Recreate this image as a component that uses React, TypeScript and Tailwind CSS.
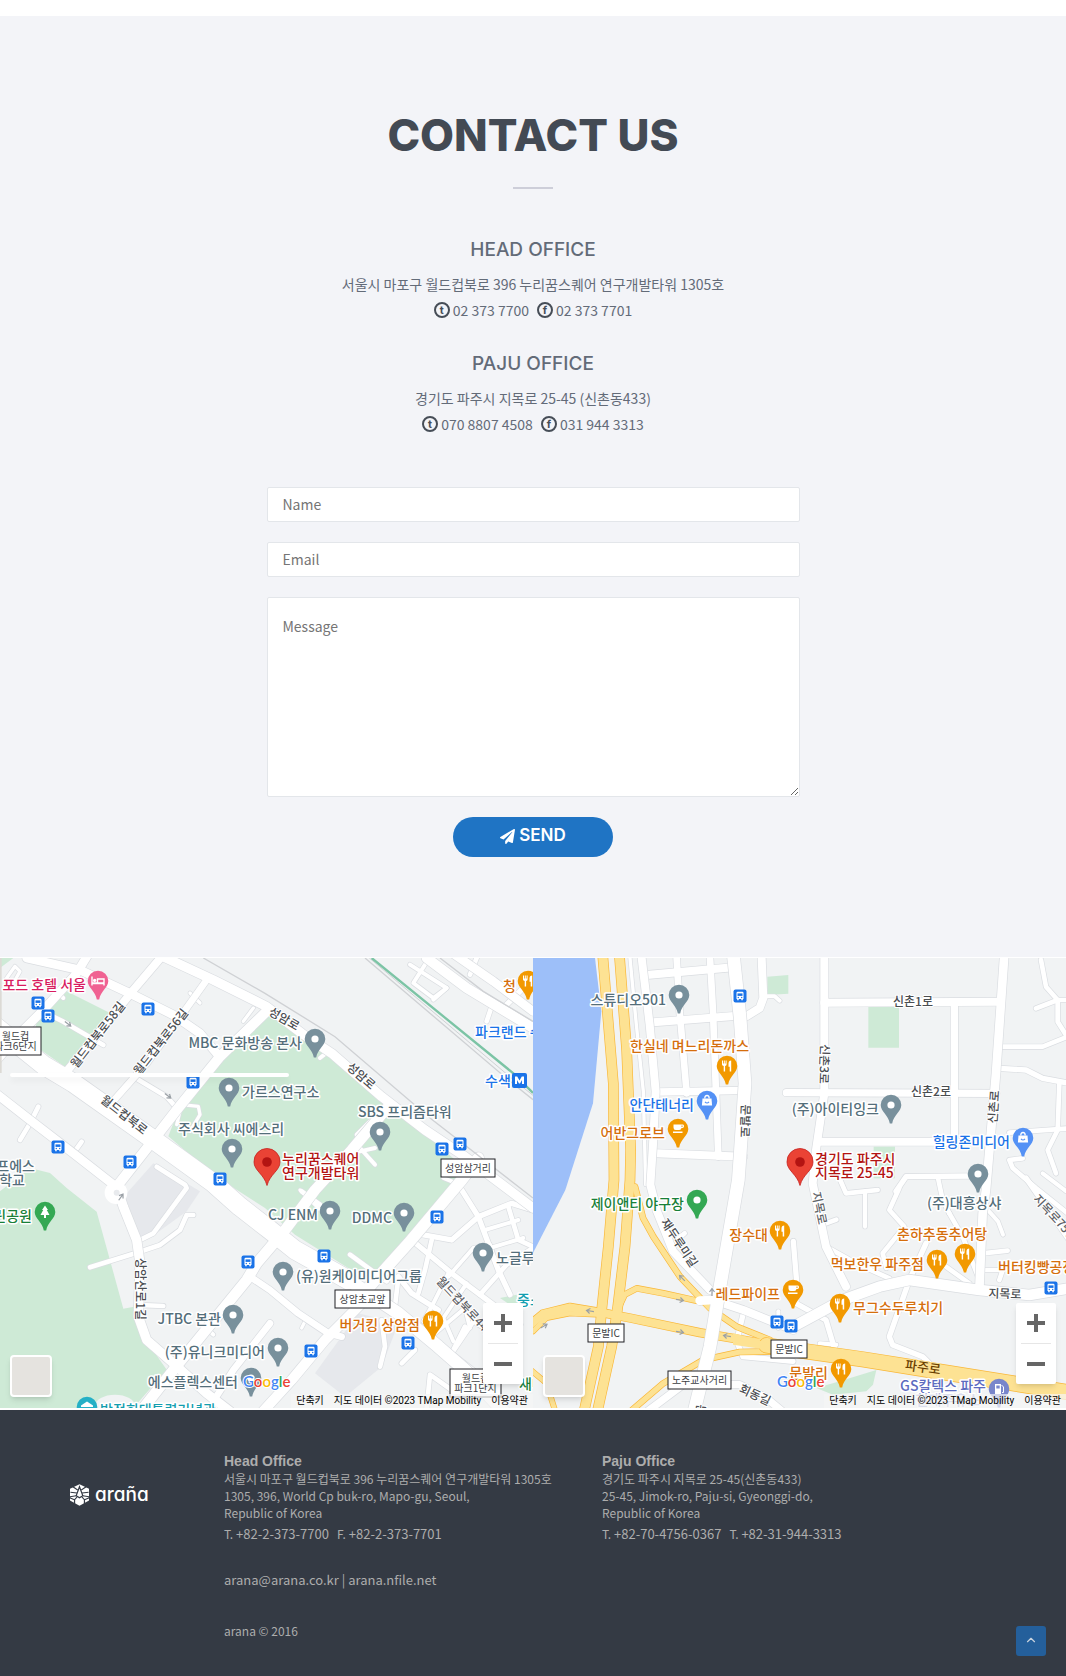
import type { ReactNode } from "react";
import { FaPaperPlane } from "react-icons/fa";
import { ChevronUp } from "lucide-react";

/* ---------- map drawing primitives ---------- */

// [points, width] in map units (three per pixel)
type Road = [string, number];

function Roads({ roads, fill = "#ffffff", edge = "#dadde1" }: { roads: Road[]; fill?: string; edge?: string }) {
  return (
    <g fill="none" strokeLinecap="round" strokeLinejoin="round">
      {roads.map(([p, w], i) => (
        <polyline key={"e" + i} points={p} stroke={edge} strokeWidth={w + 4} />
      ))}
      {roads.map(([p, w], i) => (
        <polyline key={"f" + i} points={p} stroke={fill} strokeWidth={w} />
      ))}
    </g>
  );
}

const PIN_COLORS = {
  place: "#78909c",
  food: "#f29900",
  cafe: "#f29900",
  shop: "#5491f5",
  hotel: "#f06292",
  tree: "#34a853",
  park: "#34a853",
  museum: "#25b0c6",
  gas: "#7986cb",
};
type Kind = keyof typeof PIN_COLORS;

function Glyph({ kind }: { kind: Kind }) {
  switch (kind) {
    case "food":
      return (
        <g fill="#fff">
          <path d="M-5-5.500h1v3h.8v-3h1v3h.8v-3h1v4q0 1.200-1.500 1.600V5.500h-1.400V.1Q-5-.3-5-1.500z" />
          <path d="M1.500-2.500q0-3 2.700-3V5.500H2.700V.8H1.500z" />
        </g>
      );
    case "cafe":
      return (
        <g fill="#fff">
          <path d="M-4.500-4.500h9.500q1 .3 1 1.800t-1.500 1.800h-1q-.3 2-2.300 2h-3.500q-2.200 0-2.200-2.500zM3.500-3.500v1.600h1v-1.600z" fillRule="evenodd" />
          <rect x="-5" y="2.500" width="9.500" height="1.500" />
        </g>
      );
    case "shop":
      return (
        <g>
          <path d="M-4.500-2.500h9l.6 7h-10.200z" fill="#fff" />
          <path d="M-2.200-2.500q0-3 2.200-3t2.200 3" fill="none" stroke="#fff" strokeWidth="1.300" />
          <path d="M-2 .8q2 2.400 4 0" fill="none" stroke="#5491f5" strokeWidth="1.200" />
        </g>
      );
    case "hotel":
      return (
        <g fill="none" stroke="#fff" strokeWidth="1.400">
          <path d="M-6-4.500V4.500M-6 2.500H6V4.500V-2H-.5V2M-6 2h12" />
          <circle cx="-3.300" cy="-.6" r="1" fill="#fff" />
        </g>
      );
    case "tree":
      return <path d="M0-6.500l3 4.500H1.800L4.500 3H1v3h-2V3h-3.500L-1.800-2H-3z" fill="#fff" />;
    case "museum":
      return <path d="M-6-1.500 0-5.500 6-1.500V0H-6zM-4.500 1h1.500v4h-1.500zM-.8 1H.8v4H-.8zM3 1h1.500v4H3z" fill="#fff" />;
    case "gas":
      return (
        <g>
          <path d="M-4-5H2V5h-6z" fill="#fff" />
          <rect x="-2.700" y="-3.500" width="3.400" height="3" fill="#7986cb" />
          <path d="M2.500-4l2 2v5.500H3" fill="none" stroke="#fff" />
        </g>
      );
    default:
      return <circle r="3.600" fill="#fff" />;
  }
}

function Pin({ x, y, kind = "place" }: { x: number; y: number; kind?: Kind }) {
  return (
    <g transform={`translate(${x} ${y})`}>
      <path d="M0-10.300A10.300 10.300 0 0 1 10.300 0C10.300 6.500 2.500 10 1.200 18.500H-1.200C-2.500 10-10.300 6.500-10.300 0A10.300 10.300 0 0 1 0-10.300z" fill={PIN_COLORS[kind]} />
      <Glyph kind={kind} />
    </g>
  );
}

function Marker({ x, y }: { x: number; y: number }) {
  return (
    <g transform={`translate(${x} ${y})`}>
      <path d="M0-13.500A13 13 0 0 1 13 0C13 8.500 3 12 0 23.500C-3 12-13 8.500-13 0A13 13 0 0 1 0-13.500z" fill="#ea4335" stroke="#c5221f" strokeWidth=".8" />
      <circle r="4.800" fill="#b31412" />
    </g>
  );
}

function Bus({ x, y }: { x: number; y: number }) {
  return (
    <g transform={`translate(${x} ${y})`}>
      <rect x="-6.500" y="-6.500" width="13" height="13" rx="2" fill="#1a73e8" />
      <path d="M-3.500-3q0-1.200 1.200-1.200h4.600Q3.500-4.200 3.500-3V3H2.800v1.300H1.300V3h-2.600v1.300h-1.500V3h-.7z" fill="#fff" />
      <rect x="-2.500" y="-2.600" width="5" height="2.500" fill="#1a73e8" />
      <circle cx="-1.700" cy="1.500" r=".7" fill="#1a73e8" />
      <circle cx="1.700" cy="1.500" r=".7" fill="#1a73e8" />
    </g>
  );
}

// name, x, vertical centre, colour, anchor
type Name = [string, number, number, string?, ("start" | "end")?];
const SLATE = "#546e7a";
const ORANGE = "#d56e0c";
const BLUE = "#1a73e8";
const GREEN = "#188038";
const TEAL = "#129eaf";
const RED = "#b31412";

function Names({ items }: { items: Name[] }) {
  return (
    <g className="text-[14px] font-medium" stroke="#fff" strokeWidth="3" strokeLinejoin="round" paintOrder="stroke">
      {items.map(([t, x, y, c = SLATE, a = "start"]) => (
        <text key={t + x + y} x={x} y={y + 5} fill={c} textAnchor={a}>
          {t}
        </text>
      ))}
    </g>
  );
}

// name, centre x, centre y, angle, colour
type Street = [string, number, number, number, string?];

function Streets({ items }: { items: Street[] }) {
  return (
    <g className="text-[12px] font-medium" stroke="#fff" strokeWidth="2" strokeLinejoin="round" paintOrder="stroke" textAnchor="middle">
      {items.map(([t, x, y, r, c = "#4a4d51"]) => (
        <text key={t + x + y} transform={`translate(${x} ${y}) rotate(${r})`} y="4" fill={c}>
          {t}
        </text>
      ))}
    </g>
  );
}

function Sign({ x, y, w, lines }: { x: number; y: number; w: number; lines: string[] }) {
  return (
    <g className="text-[10px]">
      <rect x={x} y={y} width={w} height={8 + lines.length * 10} fill="#fff" stroke="#202124" />
      {lines.map((l, i) => (
        <text key={l} x={x + w / 2} y={y + 13 + i * 10} fill="#3c4043" textAnchor="middle">
          {l}
        </text>
      ))}
    </g>
  );
}

function Arrows({ items }: { items: [number, number, number][] }) {
  return (
    <g fill="none" stroke="#9aa0a6" strokeWidth="1.200">
      {items.map(([x, y, r]) => (
        <path key={x + "-" + y} d="M-4 0H3M0-2.500 3.500 0 0 2.500" transform={`translate(${x} ${y}) rotate(${r})`} />
      ))}
    </g>
  );
}

function GoogleMark({ x, y }: { x: number; y: number }) {
  return (
    <text x={x} y={y} className="font-[Lato,sans-serif] text-[15px] font-semibold" stroke="#fff" strokeWidth="2" paintOrder="stroke">
      <tspan fill="#4285f4">G</tspan>
      <tspan fill="#ea4335">o</tspan>
      <tspan fill="#fbbc05">o</tspan>
      <tspan fill="#4285f4">g</tspan>
      <tspan fill="#34a853">l</tspan>
      <tspan fill="#ea4335">e</tspan>
    </text>
  );
}

/* ---------- map frame with its controls ---------- */

function MapFrame({ label, card, children }: { label: string; card?: boolean; children: ReactNode }) {
  return (
    <div className="relative h-[450px] overflow-hidden bg-[#f1f3f4]" role="region" aria-label={label}>
      <svg className="block h-full w-full" viewBox="0 0 533 450" preserveAspectRatio="xMidYMid slice" aria-hidden="true">
        {children}
      </svg>
      {card && <div className="absolute left-[10px] top-[115px] h-1 w-[279px] rounded-sm bg-white shadow-md" />}
      <button
        type="button"
        aria-label="위성 이미지 보기"
        className="absolute bottom-[11px] left-[10px] size-[42px] rounded-sm border-2 border-white bg-[#e5e3df] shadow-md"
      />
      <div className="absolute bottom-6 right-[10px] flex w-10 flex-col items-center rounded-xs bg-white text-[#666] shadow-md">
        <button type="button" aria-label="확대" className="flex size-10 items-center justify-center">
          <svg viewBox="0 0 18 18" className="size-[18px]" fill="currentColor">
            <path d="M7 0h4v7h7v4h-7v7H7v-7H0V7h7z" />
          </svg>
        </button>
        <div className="h-px w-[30px] bg-[#e6e6e6]" />
        <button type="button" aria-label="축소" className="flex size-10 items-center justify-center">
          <svg viewBox="0 0 18 18" className="size-[18px]" fill="currentColor">
            <path d="M0 7h18v4H0z" />
          </svg>
        </button>
      </div>
      <div className="absolute bottom-0 right-0 flex h-[14px] items-center whitespace-nowrap font-[Roboto,'Noto_Sans_CJK_KR',sans-serif] text-[10px] leading-[14px] text-black">
        <button type="button" className="bg-[#f5f5f5]/70 px-[5px]">단축키</button>
        <span className="bg-[#f5f5f5]/70 px-[5px]">지도 데이터 ©2023 TMap Mobility</span>
        <a href="#terms" className="bg-[#f5f5f5]/70 px-[5px]">이용약관</a>
      </div>
    </div>
  );
}

/* ---------- head office map ---------- */

const SEOUL_MINOR: Road[] = [
  ["115,446 90,496 60,546", 14],
  ["245,551 220,586", 14],
  ["120,156 190,191 310,261", 14],
  ["400,356 500,416 530,450", 14],
  ["190,120 170,100", 12],
  ["600,135 570,105", 10],
  ["730,190 760,150", 10],
  ["20,60 45,25 60,40 40,75", 10],
  ["530,500 545,440 595,445 600,470 570,520", 10],
  ["470,626 555,680 560,690 460,826 410,851", 14],
  ["270,928 420,881 480,861 540,816 560,771 580,771", 14],
  ["420,1041 490,1044", 14],
  ["640,1130 600,1090", 12],
  ["960,300 985,280", 12],
  ["1125,570 1080,580 1070,530 1110,490", 12],
  ["1080,570 1125,620", 12],
  ["905,700 960,740", 14],
  ["900,696 975,770", 10],
  ["1050,890 1160,970", 14],
  ["1385,696 1435,776 1495,936 1530,1010", 16],
  ["1245,826 1355,846 1435,776 1535,736 1599,756", 16],
  ["1235,846 1355,946 1475,1036 1560,1100", 16],
  ["1525,746 1555,846 1599,866", 14],
  ["1455,816 1555,786", 12],
  ["1470,870 1570,840", 12],
  ["1295,846 1275,936 1255,1006", 14],
  ["1345,956 1420,870 1470,860", 12],
  ["1345,946 1300,1036 1270,1090", 12],
  ["1440,1010 1520,920 1599,870", 14],
  ["1400,976 1330,1080 1360,1150", 12],
  ["1195,956 1235,1006 1315,1056", 16],
  ["1195,960 1180,1086", 14],
  ["1145,1086 1155,1166 1140,1226", 14],
  ["1245,1176 1205,1216", 14],
  ["1300,1130 1395,1050 1410,1110", 12],
  ["1395,1106 1355,1186 1450,1260", 14],
  ["1355,1186 1420,1090 1520,1150", 14],
  ["1280,1350 1290,1250 1355,1296 1400,1350", 14],
  ["1230,20 1340,90 1300,120 1240,75 1275,20", 12],
  ["1340,90 1300,125", 12],
  ["1430,0 1410,50", 14],
  ["1480,130 1460,190", 14],
  ["1570,90 1510,150", 16],
  ["920,1080 905,1110", 10],
  ["1380,680 1330,660 1350,630", 12],
];

const SEOUL_MAJOR: Road[] = [
  ["80,0 240,36 400,111 520,171 600,226 650,286", 26],
  ["-30,330 60,226 130,156 230,46 270,-20", 26],
  ["490,-10 400,96 300,220 200,340", 24],
  ["620,66 560,150 440,316 330,440", 20],
  ["-20,400 90,486 220,586 340,680", 26],
  ["800,160 660,296 530,456 460,546 350,686", 30],
  ["350,686 370,746 410,846 420,916 415,1076 440,1146 520,1216 620,1306 690,1360", 28],
  ["1165,446 1055,576 945,696 855,816 770,916 740,966 520,1236 430,1350", 32],
  ["750,956 810,996 895,1066 985,1126 1025,1136", 20],
  ["810,1096 700,1236 640,1330", 20],
  ["1085,1036 975,1146 875,1266 780,1370", 30],
  ["1435,600 1385,666 1225,856 1135,956 1065,1036", 34],
  ["490,-4 640,66 800,146 905,226 995,286 1145,416 1275,516 1395,596 1599,750", 28],
  ["1280,0 1400,90 1599,210", 30],
  ["1350,-20 1480,70 1599,160", 26],
  ["-20,200 130,321 220,375 460,545 640,675 720,746 810,816 885,876 1045,966", 56],
  ["1045,966 1195,1066 1315,1166 1395,1236 1520,1370", 38],
];

function SeoulMap() {
  return (
    <MapFrame label="누리꿈스퀘어 지도" card>
      <rect width="533" height="450" fill="#f1f3f4" />
      <g transform="scale(0.33333)">
        <g fill="#ceead6">
          <path d="M110 190 200 100 330 165 230 290 200 330 100 260z" />
          <path d="M800 160 905 226 985 286 1145 426 1285 536 1370 610 1385 666 1200 880 1140 940 1060 940 885 830 795 750 640 650 505 535 530 470 700 270z" />
          <path d="M0 700 90 630 150 645 200 690 290 761 370 1052 410 1045 440 1150 500 1235 400 1350H0z" />
          <path d="M0 0H40L0 30z" />
          <path d="M1500 1020 1550 1010 1560 1060z" />
        </g>
        <g fill="#e6e8ec">
          <path d="M460 616 600 700 560 760 450 840 410 840 350 740z" />
          <path d="M945 1246 1075 1066 1195 1096 1145 1226 1035 1316z" />
        </g>
        <ellipse cx="345" cy="1345" rx="60" ry="35" fill="#f1f3f4" />
        <Roads roads={SEOUL_MINOR} />
        <Roads roads={SEOUL_MAJOR} />
        <circle cx="348" cy="704" r="34" fill="#fff" />
        <circle cx="350" cy="704" r="9" fill="#e8eaed" />
        <g fill="none" stroke="#cfd1d4" strokeWidth="4">
          <polyline points="610,0 795,106 1005,236 1290,480 1599,720" />
          <polyline points="1095,0 1530,370 1599,425" />
          <polyline points="1108,0 1540,365 1599,412" strokeWidth="3" />
          <polyline points="1320,0 1450,100 1599,190" />
        </g>
        <polyline points="1115,0 1540,346 1599,405" fill="none" stroke="#7cc4a5" strokeWidth="7" />
        <path d="M0 0H5V345H0z" fill="#dcdad5" />
      </g>
      <Arrows items={[[68, 66, 38], [168, 138, 38], [121, 239, -55]]} />
      <Bus x={38} y={45} />
      <Bus x={48} y={58} />
      <Bus x={148} y={51} />
      <Bus x={193} y={124} />
      <Bus x={58} y={189} />
      <Bus x={130} y={204} />
      <Bus x={220} y={221} />
      <Bus x={460} y={186} />
      <Bus x={442} y={191} />
      <Bus x={248} y={304} />
      <Bus x={437} y={259} />
      <Bus x={324} y={298} />
      <Bus x={311} y={393} />
      <Bus x={408} y={385} />
      <Streets
        items={[
          ["월드컵북로58길", 98, 77, -52],
          ["월드컵북로56길", 161, 84, -52],
          ["월드컵북로", 124, 157, 38],
          ["성암로", 284, 61, 30],
          ["성암로", 361, 118, 41],
          ["상암산로1길", 140, 331, 90],
          ["월드컵북로44길", 466, 350, 47, "#5f6368"],
        ]}
      />
      <Sign x={-10} y={69} w={51} lines={["월드컵", "파크6단지"]} />
      <Sign x={441} y={201} w={54} lines={["성암삼거리"]} />
      <Sign x={335} y={332} w={55} lines={["상암초교앞"]} />
      <Sign x={450} y={411} w={51} lines={["월드컵", "파크1단지"]} />
      <Pin x={98} y={23} kind="hotel" />
      <Pin x={315} y={81} />
      <Pin x={229} y={130} />
      <Pin x={232} y={191} />
      <Pin x={380} y={174} />
      <Pin x={528} y={23} kind="food" />
      <Pin x={45} y={254} kind="tree" />
      <Pin x={233} y={357} />
      <Pin x={278} y={390} />
      <Pin x={251} y={420} />
      <Pin x={87} y={449} kind="museum" />
      <Pin x={330} y={253} />
      <Pin x={404} y={255} />
      <Pin x={483} y={295} />
      <Pin x={283} y={314} />
      <Pin x={433} y={363} kind="food" />
      <rect x="512" y="115" width="15" height="15" rx="2" fill="#1a73e8" />
      <path d="M515 126v-7.500h2.200l2.300 4 2.300-4h2.200v7.500h-2v-4l-2 3.500h-1l-2-3.500v4z" fill="#fff" />
      <Names
        items={[
          ["포드 호텔 서울", 86, 27, "#d81b60", "end"],
          ["MBC 문화방송 본사", 302, 85, SLATE, "end"],
          ["가르스연구소", 242, 134],
          ["주식회사 씨에스리", 178, 171],
          ["SBS 프리즘타워", 358, 154],
          ["누리꿈스퀘어", 282, 201, RED],
          ["연구개발타워", 282, 215, RED],
          ["파크랜드 수색", 475, 74, BLUE],
          ["수색", 485, 123, BLUE],
          ["청", 503, 28, ORANGE],
          ["프에스", 35, 208, SLATE, "end"],
          ["학교", 25, 222, SLATE, "end"],
          ["린공원", 32, 258, GREEN, "end"],
          ["JTBC 본관", 221, 361, SLATE, "end"],
          ["(주)유니크미디어", 265, 394, SLATE, "end"],
          ["에스플렉스센터", 238, 424, SLATE, "end"],
          ["박정희대통령기념관", 100, 452, TEAL],
          ["CJ ENM", 318, 257, SLATE, "end"],
          ["DDMC", 392, 260, SLATE, "end"],
          ["노글루", 496, 300],
          ["(유)원케이미디어그룹", 296, 318],
          ["버거킹 상암점", 420, 367, ORANGE, "end"],
          ["중소", 517, 342, TEAL],
          ["새마을", 519, 426, GREEN],
        ]}
      />
      <Marker x={267} y={204} />
      <GoogleMark x={243} y={429} />
    </MapFrame>
  );
}

/* ---------- Paju office map ---------- */

const PAJU_MINOR: Road[] = [
  ["291,0 310,200 331,400 338,680", 10],
  ["431,0 440,160 461,406", 20],
  ["531,0 540,160 556,596", 20],
  ["341,51 600,28", 24],
  ["361,193 631,172", 24],
  ["371,402 641,397", 22],
  ["371,586 631,596", 24],
  ["686,0 691,120 680,150 640,175", 24],
  ["690,115 725,115 740,128", 12],
  ["420,856 455,826", 14],
  ["781,850 790,960 789,1036 879,1086 904,1170", 16],
  ["736,1060 736,1110", 12],
  ["860,1156 910,1160", 12],
  ["1524,6 1539,86 1574,126 1574,191 1599,231", 14],
  ["1509,151 1574,126 1609,126", 14],
  ["1409,266 1529,266 1609,234", 14],
  ["1399,331 1479,336 1529,361 1609,376", 16],
  ["1579,376 1574,516 1544,576 1569,646", 14],
  ["1429,524 1609,511", 14],
  ["1469,601 1429,606 1439,630 1509,690 1609,770", 14],
  ["1529,646 1600,700", 12],
  ["1089,700 1119,656 1329,654", 16],
  ["1215,660 1229,726 1249,766", 14],
  ["919,660 939,706 1034,696", 14],
  ["996,700 996,806", 12],
  ["1099,690 1069,756 1114,806 1049,886 1060,930", 14],
  ["1249,766 1289,836 1339,966", 14],
  ["1179,856 1129,966 1069,1136 1079,1161 1169,1196 1189,1216", 16],
  ["1239,926 1309,976", 14],
  ["879,866 969,916 1069,961", 14],
  ["1349,886 1424,878", 14],
  ["1349,936 1409,936 1399,966", 14],
  ["1350,740 1395,790 1410,830", 12],
  ["1479,660 1609,846", 16],
  ["869,800 910,785", 14],
  ["630,1070 611,1150 630,1196 780,1210", 16],
];

const PAJU_MAJOR: Road[] = [
  ["326,0 350,200 368,400 360,560 352,680 372,760 420,880 531,996", 24],
  ["874,0 874,406 849,576 839,676 879,866 939,986", 24],
  ["874,134 1399,131", 24],
  ["760,404 1389,406", 22],
  ["859,551 1269,551", 24],
  ["1264,136 1264,556", 22],
  ["1414,-10 1389,346 1359,696 1349,766 1339,996", 26],
  ["500,1029 540,1026 631,1056 781,1116", 24],
  ["781,1106 929,1026 1039,986 1129,966 1339,996 1489,1011 1609,991", 32],
  ["290,1400 450,1280 620,1280 700,1320 760,1370", 22],
  ["601,-10 621,176 636,376 621,596 616,666 561,986 531,1166 481,1370", 38],
];

const HIGHWAYS: Road[] = [
  ["0,1120 40,1080 111,1066 206,1070", 14],
  ["-20,1110 30,1068 111,1048 206,1064 291,1080 500,1124 711,1160 819,1176", 24],
  ["-20,1225 40,1275 70,1370", 14],
  ["306,686 330,780 361,836 441,956 531,1051 611,1106 711,1146", 16],
  ["256,1050 275,1010 311,991 391,1006 491,1028", 16],
  ["281,1370 391,1276 511,1206 620,1182 740,1180", 16],
  ["209,-10 221,136 241,376 243,666 226,866 206,1056 196,1166 151,1370", 28],
  ["259,-10 281,276 293,576 291,666 276,866 253,1056 236,1166 191,1370", 28],
];

function PajuMap() {
  return (
    <MapFrame label="경기도 파주시 지목로 25-45 지도">
      <rect width="533" height="450" fill="#f1f3f4" />
      <g transform="scale(0.33333)">
        <path d="M0 0H186L205 160 180 436 97 696 0 885z" fill="#9dbff9" />
        <g fill="#ceead6">
          <path d="M703 56 766 51V107L703 111z" />
          <path d="M1006 146H1098V269H1006z" />
          <path d="M1022 566H1086V661H1022z" />
          <path d="M850 1290 920 1270 1030 1236 1020 1280 1000 1300 900 1310z" />
        </g>
        <Roads roads={PAJU_MINOR} />
        <Roads roads={PAJU_MAJOR.slice(0, -1)} />
        <Roads roads={HIGHWAYS} fill="#fde293" edge="#f9b738" />
        <Roads roads={[["700,1162 819,1180 989,1204 1189,1236 1620,1305", 44]]} fill="#fde293" edge="#f9b738" />
        <path d="M600 1125 720 1160V1178L600 1160z" fill="#fde293" />
        <Roads roads={PAJU_MAJOR.slice(-1)} />
        <Roads roads={[["500,1028 545,1026", 22]]} edge="#ffffff" />
      </g>
      <Arrows items={[[57, 353, 190], [11, 368, -30], [147, 374, 10], [194, 378, 190], [149, 320, 225], [147, 342, 10], [179, 334, -90]]} />
      <Bus x={207} y={38} />
      <Bus x={244} y={364} />
      <Bus x={258} y={368} />
      <Bus x={518} y={330} />
      <Streets
        items={[
          ["문발로", 212, 163, 92],
          ["신촌1로", 380, 44, 0],
          ["신촌3로", 291, 106, 92],
          ["신촌2로", 398, 134, 0],
          ["신촌로", 461, 149, -86],
          ["재두루미길", 146, 285, 56],
          ["회동길", 222, 437, 25],
          ["지목로", 286, 250, 78, "#5f6368"],
          ["지목로", 472, 336, 2],
          ["지목로75번길", 526, 264, 47, "#5f6368"],
          ["문발로", 166, 463, 97],
        ]}
      />
      <g className="text-[13px] font-medium" stroke="#fde293" strokeWidth="2" paintOrder="stroke" textAnchor="middle">
        <text transform="translate(390 409) rotate(8)" y="5" fill="#6b3f00">파주로</text>
      </g>
      <Sign x={55} y={366} w={36} lines={["문발IC"]} />
      <Sign x={238} y={382} w={36} lines={["문발IC"]} />
      <Sign x={135} y={413} w={63} lines={["노주교사거리"]} />
      <Pin x={146} y={37} />
      <Pin x={194} y={108} kind="food" />
      <Pin x={174} y={143} kind="shop" />
      <Pin x={145} y={171} kind="cafe" />
      <Pin x={358} y={147} />
      <Pin x={490} y={180} kind="shop" />
      <Pin x={445} y={216} />
      <Pin x={164} y={242} kind="park" />
      <Pin x={247} y={273} kind="food" />
      <Pin x={260} y={332} kind="cafe" />
      <Pin x={432} y={296} kind="food" />
      <Pin x={404} y={302} kind="food" />
      <Pin x={307} y={346} kind="food" />
      <Pin x={308} y={411} kind="food" />
      <Pin x={466} y={431} kind="gas" />
      <Names
        items={[
          ["스튜디오501", 133, 42, SLATE, "end"],
          ["한실네 며느리돈까스", 97, 88, ORANGE],
          ["안단테너리", 161, 147, BLUE, "end"],
          ["어반그로브", 132, 175, ORANGE, "end"],
          ["(주)아이티잉크", 346, 151, SLATE, "end"],
          ["힐링존미디어", 477, 184, BLUE, "end"],
          ["경기도 파주시", 282, 201, RED],
          ["지목로 25-45", 282, 215, RED],
          ["제이앤티 야구장", 151, 246, GREEN, "end"],
          ["장수대", 235, 277, ORANGE, "end"],
          ["레드파이프", 247, 336, ORANGE, "end"],
          ["(주)대흥상샤", 394, 245],
          ["춘하추동추어탕", 364, 276, ORANGE],
          ["먹보한우 파주점", 391, 306, ORANGE, "end"],
          ["버터킹빵공장", 465, 309, ORANGE],
          ["무그수두루치기", 320, 350, ORANGE],
          ["문발리", 295, 415, ORANGE, "end"],
          ["GS칼텍스 파주", 453, 428, "#5c6bc0", "end"],
          ["현대주유소", 447, 442, "#9fa8da", "end"],
        ]}
      />
      <Marker x={267} y={204} />
      <GoogleMark x={244} y={429} />
    </MapFrame>
  );
}

/* ---------- contact section ---------- */

function Badge({ children }: { children: string }) {
  return (
    <span className="inline-flex size-4 items-center justify-center rounded-full border-2 border-[#464d57] font-[Inter,sans-serif] text-[11px] font-bold leading-none text-[#464d57]">
      {children}
    </span>
  );
}

function Phone({ kind, number }: { kind: string; number: string }) {
  return (
    <span className="flex items-center gap-[3px]">
      <Badge>{kind}</Badge>
      {number}
    </span>
  );
}

function Office({ title, address, tel, fax }: { title: string; address: string; tel: string; fax: string }) {
  return (
    <div className="flex flex-col items-center text-center text-[14px] leading-[26px] text-[#636b78]">
      <h3 className="mb-2 font-[Inter,sans-serif] text-[19px] font-medium leading-[26px]">{title}</h3>
      <p>{address}</p>
      <p className="flex gap-2">
        <Phone kind="t" number={tel} />
        <Phone kind="f" number={fax} />
      </p>
    </div>
  );
}

const FIELD = "block w-full rounded-xs border border-[#e3e6ea] bg-white px-[15px] text-[14px] text-[#555] placeholder:text-[#757575]";

function Contact() {
  return (
    <section id="contact" className="mt-4 flex flex-col items-center bg-[#f3f4f8] pb-[100px] pt-[91px]">
      <h2 className="font-[Inter,sans-serif] text-[44px] font-extrabold leading-[56px] text-[#434a54]">CONTACT US</h2>
      <div className="mb-[48px] mt-6 h-[2px] w-10 bg-[#cdced9]" />
      <div className="flex flex-col gap-7">
        <Office title="HEAD OFFICE" address="서울시 마포구 월드컵북로 396 누리꿈스퀘어 연구개발타워 1305호" tel="02 373 7700" fax="02 373 7701" />
        <Office title="PAJU OFFICE" address="경기도 파주시 지목로 25-45 (신촌동433)" tel="070 8807 4508" fax="031 944 3313" />
      </div>
      <form className="mt-[50px] flex w-1/2 flex-col gap-5" onSubmit={(e) => e.preventDefault()}>
        <input type="text" aria-label="Name" placeholder="Name" className={FIELD + " h-[35px] pb-[2px]"} />
        <input type="email" aria-label="Email" placeholder="Email" className={FIELD + " h-[35px] pb-[2px]"} />
        <textarea aria-label="Message" placeholder="Message" className={FIELD + " h-[200px] py-[17px] leading-[22px]"} />
        <button
          type="submit"
          className="flex h-10 w-40 items-center justify-center gap-1 self-center rounded-full bg-[#1f74c4] pb-[2px] font-[Inter,sans-serif] text-[17px] font-semibold text-white"
        >
          <FaPaperPlane className="size-[15px]" aria-hidden="true" />
          SEND
        </button>
      </form>
    </section>
  );
}

/* ---------- footer ---------- */

function Logo() {
  return (
    <a href="#top" aria-label="araña" className="flex items-center gap-[6px] text-white">
      <svg viewBox="3 0 46 64" className="h-[22px] w-[19px]" preserveAspectRatio="none" aria-hidden="true">
        <path d="M26 1 49 14V48L26 63 3 48V14z" fill="currentColor" />
        <g fill="none" stroke="#343a44" strokeWidth="3">
          <path d="M26 8 18 34 26 40 34 34z" />
          <path d="M18 34 0 38M34 34 52 38M20 26 4 24M32 26 48 24M22 18 10 8M30 18 42 8M14 62V46L2 40M38 62V46L50 40M20 38 14 46M32 38 38 46" />
        </g>
      </svg>
      <span className="font-[Inter,sans-serif] text-[19px] font-medium leading-[22px] [font-feature-settings:'cv11']">araña</span>
    </a>
  );
}

function FooterOffice({ title, lines, phones }: { title: string; lines: string[]; phones: [string, string][] }) {
  return (
    <div className="text-[12px] leading-[17px]">
      <h4 className="font-['Liberation_Sans',Arial,sans-serif] text-[14px] font-bold">{title}</h4>
      {lines.map((l) => (
        <p key={l}>{l}</p>
      ))}
      <p className="mt-[3px] flex gap-2 text-[13px] leading-[19px]">
        {phones.map(([k, n]) => (
          <span key={n}>
            <span className="text-[12px]">{k}.</span> {n}
          </span>
        ))}
      </p>
    </div>
  );
}

function Footer() {
  return (
    <footer className="relative grid grid-cols-[154fr_378fr_464fr] bg-[#343a44] pb-9 pl-[70px] pt-[43px] text-[#adadad]">
      <div className="pt-[31px]">
        <Logo />
      </div>
      <div>
        <FooterOffice
          title="Head Office"
          lines={["서울시 마포구 월드컵북로 396 누리꿈스퀘어 연구개발타워 1305호", "1305, 396, World Cp buk-ro, Mapo-gu, Seoul,", "Republic of Korea"]}
          phones={[["T", "+82-2-373-7700"], ["F", "+82-2-373-7701"]]}
        />
        <p className="mt-[27px] text-[13px] leading-[19px]">
          <a href="mailto:arana@arana.co.kr">arana@arana.co.kr</a> | <a href="https://arana.nfile.net">arana.nfile.net</a>
        </p>
        <p className="mt-8 text-[12px] leading-[19px]">arana © 2016</p>
      </div>
      <FooterOffice
        title="Paju Office"
        lines={["경기도 파주시 지목로 25-45(신촌동433)", "25-45, Jimok-ro, Paju-si, Gyeonggi-do,", "Republic of Korea"]}
        phones={[["T", "+82-70-4756-0367"], ["T", "+82-31-944-3313"]]}
      />
      <a
        href="#top"
        aria-label="맨 위로"
        className="absolute bottom-5 right-5 flex size-[30px] items-center justify-center rounded-[3px] bg-[#245f9b] pb-[3px] text-[#c9d3de]"
      >
        <ChevronUp className="size-[14px]" />
      </a>
    </footer>
  );
}

export default function App() {
  return (
    <div id="top" className="bg-white font-['Noto_Sans_CJK_KR',sans-serif]">
      <Contact />
      <div className="grid grid-cols-2 border-b-2 border-t border-white">
        <SeoulMap />
        <PajuMap />
      </div>
      <Footer />
    </div>
  );
}
